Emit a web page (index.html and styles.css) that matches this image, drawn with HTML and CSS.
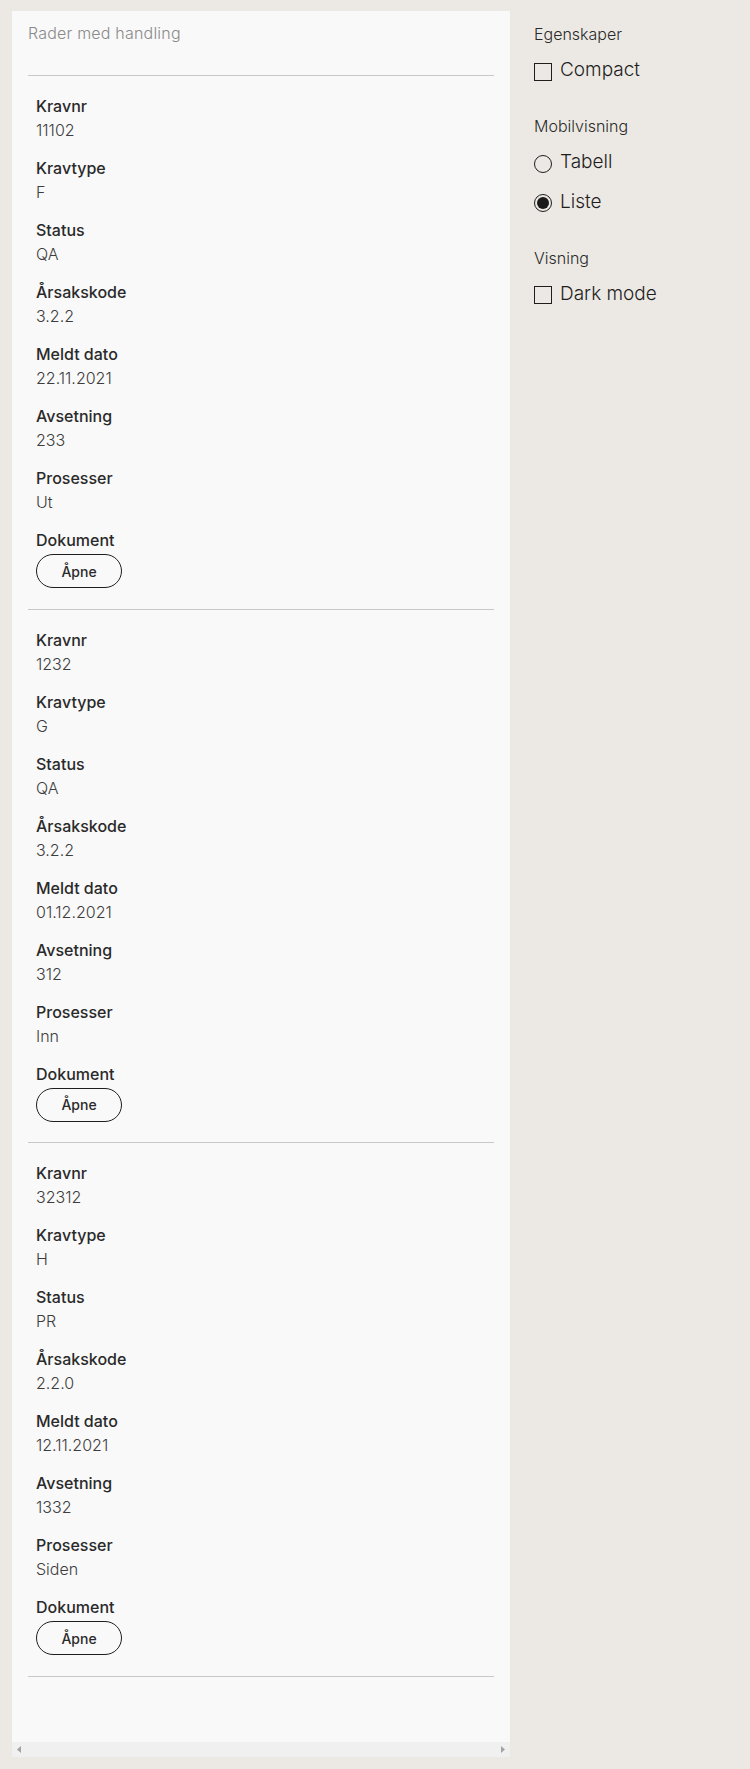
FILE: index.html
```html
<!DOCTYPE html>
<html lang="no">
<head>
<meta charset="utf-8">
<title>Rader med handling</title>
<link rel="stylesheet" href="styles.css">
</head>
<body>
<div class="page">
  <section class="panel">
    <div class="panel-body">
      <div class="panel-title">Rader med handling</div>

      <div class="card">
        <div class="field"><div class="label">Kravnr</div><div class="value">11102</div></div>
        <div class="field"><div class="label">Kravtype</div><div class="value">F</div></div>
        <div class="field"><div class="label">Status</div><div class="value">QA</div></div>
        <div class="field"><div class="label">Årsakskode</div><div class="value">3.2.2</div></div>
        <div class="field"><div class="label">Meldt dato</div><div class="value">22.11.2021</div></div>
        <div class="field"><div class="label">Avsetning</div><div class="value">233</div></div>
        <div class="field"><div class="label">Prosesser</div><div class="value">Ut</div></div>
        <div class="field field-doc"><div class="label">Dokument</div><button class="btn" type="button">Åpne</button></div>
      </div>

      <div class="card">
        <div class="field"><div class="label">Kravnr</div><div class="value">1232</div></div>
        <div class="field"><div class="label">Kravtype</div><div class="value">G</div></div>
        <div class="field"><div class="label">Status</div><div class="value">QA</div></div>
        <div class="field"><div class="label">Årsakskode</div><div class="value">3.2.2</div></div>
        <div class="field"><div class="label">Meldt dato</div><div class="value">01.12.2021</div></div>
        <div class="field"><div class="label">Avsetning</div><div class="value">312</div></div>
        <div class="field"><div class="label">Prosesser</div><div class="value">Inn</div></div>
        <div class="field field-doc"><div class="label">Dokument</div><button class="btn" type="button">Åpne</button></div>
      </div>

      <div class="card">
        <div class="field"><div class="label">Kravnr</div><div class="value">32312</div></div>
        <div class="field"><div class="label">Kravtype</div><div class="value">H</div></div>
        <div class="field"><div class="label">Status</div><div class="value">PR</div></div>
        <div class="field"><div class="label">Årsakskode</div><div class="value">2.2.0</div></div>
        <div class="field"><div class="label">Meldt dato</div><div class="value">12.11.2021</div></div>
        <div class="field"><div class="label">Avsetning</div><div class="value">1332</div></div>
        <div class="field"><div class="label">Prosesser</div><div class="value">Siden</div></div>
        <div class="field field-doc"><div class="label">Dokument</div><button class="btn" type="button">Åpne</button></div>
      </div>
    </div>
    <div class="hscroll">
      <svg class="arrow" width="4" height="7" viewBox="0 0 4 7"><path d="M4 0V7L0 3.5Z" fill="#a3a3a3"/></svg>
      <svg class="arrow" width="4" height="7" viewBox="0 0 4 7"><path d="M0 0V7L4 3.5Z" fill="#a3a3a3"/></svg>
    </div>
  </section>

  <aside class="options">
    <div class="group">
      <div class="group-title">Egenskaper</div>
      <label class="option">
        <span class="box"></span><span class="opt-text">Compact</span>
      </label>
    </div>
    <div class="group">
      <div class="group-title">Mobilvisning</div>
      <label class="option">
        <svg class="radio" width="18" height="18" viewBox="0 0 18 18"><circle cx="9" cy="9" r="8.5" fill="none" stroke="#1e1e1e" stroke-width="1"/></svg>
        <span class="opt-text">Tabell</span>
      </label>
      <label class="option">
        <svg class="radio" width="18" height="18" viewBox="0 0 18 18"><circle cx="9" cy="9" r="8.5" fill="none" stroke="#1e1e1e" stroke-width="1"/><circle cx="9" cy="9" r="6" fill="#1a1a1a"/></svg>
        <span class="opt-text">Liste</span>
      </label>
    </div>
    <div class="group">
      <div class="group-title">Visning</div>
      <label class="option">
        <span class="box"></span><span class="opt-text">Dark mode</span>
      </label>
    </div>
  </aside>
</div>
</body>
</html>
```

FILE: styles.css
```css
* { box-sizing: border-box; }

html, body {
  margin: 0;
  padding: 0;
}

body {
  background: #ece9e4;
  font-family: Inter, "Liberation Sans", sans-serif;
  color: #1e1e1e;
}

.page {
  display: flex;
  align-items: flex-start;
  gap: 24px;
  padding: 11px 0 0 12px;
}

.panel {
  width: 498px;
  background: #f9f9f9;
  display: flex;
  flex-direction: column;
}

.panel-body {
  padding: 10px 16px 65px 16px;
}

.panel-title {
  font-size: 16px;
  line-height: 24px;
  font-weight: 300;
  color: #8a8a8a;
  letter-spacing: 0.2px;
  padding-bottom: 30px;
  border-bottom: 1px solid #c8c8c8;
}

.card {
  padding: 18px 8px 20.5px 8px;
  border-bottom: 1px solid #c8c8c8;
}

.field {
  margin-bottom: 14px;
}

.field-doc {
  margin-bottom: 0;
}

.label {
  font-size: 16px;
  line-height: 24px;
  font-weight: 500;
  color: #2a2a2a;
}

.value {
  font-size: 16px;
  line-height: 24px;
  font-weight: 300;
  color: #3d3d3d;
}

.btn {
  display: block;
  margin-top: 2px;
  width: 86px;
  height: 34px;
  border: 1px solid #1e1e1e;
  border-radius: 17px;
  background: transparent;
  font-family: Inter, "Liberation Sans", sans-serif;
  font-size: 14px;
  font-weight: 500;
  color: #2a2a2a;
  padding: 0;
}

.hscroll {
  height: 15px;
  background: #f0f0f0;
  display: flex;
  align-items: center;
  justify-content: space-between;
  padding: 0 5px 0 5px;
}

.arrow {
  display: block;
}

.options {
  padding-top: 11px;
  display: flex;
  flex-direction: column;
  gap: 22.5px;
}

.group-title {
  font-size: 16px;
  line-height: 24px;
  font-weight: 300;
  color: #2a2a2a;
  margin-bottom: 6px;
}

.option {
  display: flex;
  align-items: center;
  height: 39.5px;
  gap: 8px;
}

.box {
  width: 18px;
  height: 18px;
  border: 1px solid #1e1e1e;
  display: block;
}

.radio {
  display: block;
}

.opt-text {
  font-size: 19px;
  font-weight: 300;
  color: #1e1e1e;
  line-height: 24px;
  padding-bottom: 3px;
}
```
